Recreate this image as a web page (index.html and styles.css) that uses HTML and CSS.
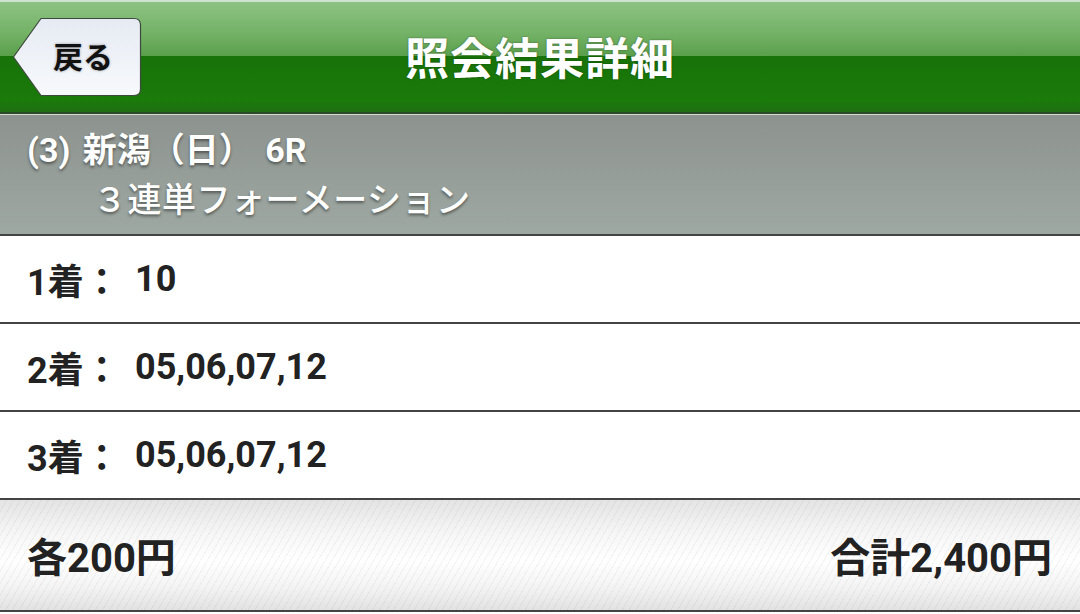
FILE: index.html
```html
<!DOCTYPE html>
<html lang="ja">
<head>
  <meta charset="UTF-8" />
  <meta name="viewport" content="width=device-width, initial-scale=1" />
  <title>照会結果詳細</title>
  <link rel="stylesheet" href="styles.css">
</head>
<body>

  <header class="titlebar">
    <a class="back-btn" href="#">
      <svg class="back-shape" width="130" height="80" viewBox="0 0 130 80">
        <defs>
          <linearGradient id="btnFill" x1="0" y1="0" x2="0" y2="1">
            <stop offset="0" stop-color="#e6ebf3" />
            <stop offset="1" stop-color="#f7f9fc" />
          </linearGradient>
        </defs>
        <path d="M29 1.5 H122 Q128.5 1.5 128.5 8 V72 Q128.5 78.5 122 78.5 H29 L1.5 40 Z"
              fill="url(#btnFill)" stroke="#3f4a3f" stroke-width="1.2" />
      </svg>
      <span class="back-label">戻る</span>
    </a>
    <h1>照会結果詳細</h1>
  </header>

  <section class="race-info">
    <div class="race-line">(3) 新潟（日） 6R</div>
    <div class="bet-type">３連単フォーメーション</div>
  </section>

  <ul class="picks">
    <li><span class="pick-label">1着：</span><span class="pick-nums">10</span></li>
    <li><span class="pick-label">2着：</span><span class="pick-nums">05,06,07,12</span></li>
    <li><span class="pick-label">3着：</span><span class="pick-nums">05,06,07,12</span></li>
  </ul>

  <footer class="summary">
    <span>各200円</span>
    <span>合計2,400円</span>
  </footer>

</body>
</html>
```

FILE: styles.css
```css
body {
  margin: 0;
  padding: 0;
  width: 1080px;
  height: 614px;
  overflow: hidden;
  background: #ffffff;
  font-family: Roboto, "Noto Sans CJK JP", sans-serif;
  font-weight: 700;
}

.titlebar {
  position: relative;
  height: 110px;
  border-top: 2px solid #cfe3cf;
  border-bottom: 2px solid #2d4a28;
  background: linear-gradient(to bottom, #8dc283 0%, #72b165 30%, #5a9f4b 49%, #187308 49.5%, #1a7a0a 90%, #1f6e12 100%);
  display: flex;
  align-items: center;
  justify-content: center;
}

.titlebar h1 {
  margin: 0 0 3px;
  color: #ffffff;
  font-family: "Noto Sans CJK JP", sans-serif;
  font-size: 44px;
  font-weight: 700;
  letter-spacing: 1px;
  text-shadow: 0 0 2px rgba(0,0,0,0.45);
}

.back-btn {
  position: absolute;
  left: 12px;
  top: 15px;
  width: 130px;
  height: 80px;
  text-decoration: none;
}

.back-shape {
  position: absolute;
  left: 0;
  top: 0;
}

.back-label {
  position: absolute;
  left: 41px;
  top: 18px;
  color: #111111;
  font-family: "Noto Sans CJK JP", sans-serif;
  font-size: 30px;
  font-weight: 700;
  line-height: 40px;
  text-shadow: 0 0 3px rgba(0,0,0,0.35);
}

.race-info {
  height: 122px;
  border-top: 1px solid #d4dad4;
  border-bottom: 2px solid #444444;
  background: linear-gradient(to bottom, #8d938f, #9ea8a2);
  color: #ffffff;
  padding: 0 0 0 27px;
  box-sizing: border-box;
  font-size: 34px;
  text-shadow: 0 2px 3px rgba(0,0,0,0.45);
}

.race-line {
  padding-top: 10px;
  line-height: 50px;
  word-spacing: 4px;
}

.bet-type {
  padding-left: 66px;
  line-height: 50px;
  letter-spacing: 0.5px;
  font-weight: 500;
}

.picks {
  list-style: none;
  margin: 0;
  padding: 0;
}

.picks li {
  display: flex;
  align-items: center;
  height: 86px;
  padding-left: 27px;
  border-bottom: 2px solid #444444;
  color: #222222;
  font-size: 36px;
}

.pick-label {
  width: 108px;
}

.summary {
  height: 112px;
  box-sizing: border-box;
  border-bottom: 2px solid #444444;
  display: flex;
  align-items: center;
  justify-content: space-between;
  padding: 0 28px 0 27px;
  color: #222222;
  font-size: 40px;
  background:
    repeating-linear-gradient(-60deg, rgba(0,0,0,0.045) 0, rgba(0,0,0,0.045) 1px, transparent 1px, transparent 6px),
    linear-gradient(to bottom, #e4e4e4 0%, #f6f6f6 30%, #ffffff 55%, #f3f3f3 80%, #e2e2e2 100%);
}
```
